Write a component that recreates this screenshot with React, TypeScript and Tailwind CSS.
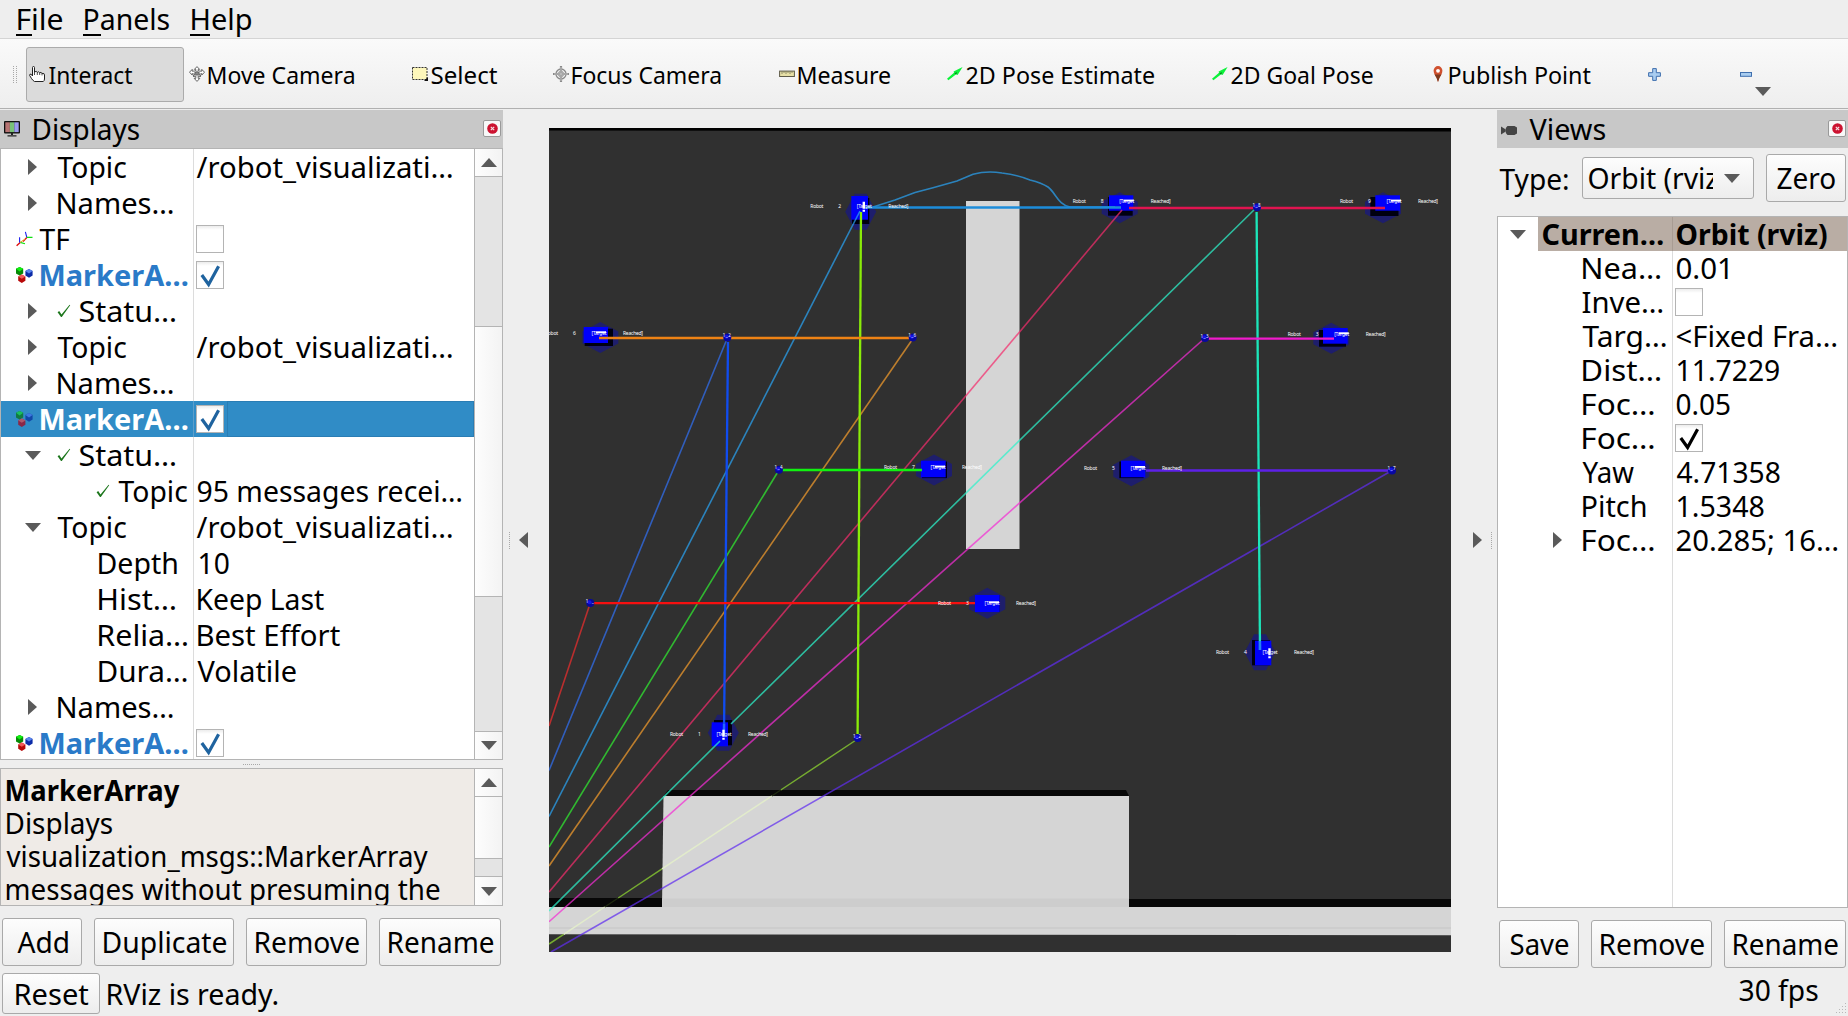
import { useLayoutEffect, useRef, type ReactNode } from "react";

/* ---------- text fitted to a given ink width ---------- */

function T({ w, className = "", children }: { w: number; className?: string; children: string }) {
  const ref = useRef<HTMLSpanElement>(null);
  useLayoutEffect(() => {
    const el = ref.current;
    if (!el) return;
    const ctx = document.createElement("canvas").getContext("2d");
    if (!ctx) return;
    const cs = getComputedStyle(el);
    ctx.font = `${cs.fontWeight} ${cs.fontSize} ${cs.fontFamily}`;
    const m = ctx.measureText(children);
    const k = w / (m.actualBoundingBoxLeft + m.actualBoundingBoxRight);
    el.style.transform = `translateX(${m.actualBoundingBoxLeft * k + 0.5}px) scaleX(${k})`;
  }, [w, children]);
  return (
    <span className={`block shrink-0 ${className}`} style={{ width: w }}>
      <span ref={ref} className="inline-block origin-left whitespace-pre">
        {children}
      </span>
    </span>
  );
}

/* ---------- small icons ---------- */

const Down = ({ className = "" }: { className?: string }) => (
  <svg className={`h-[9px] w-4 shrink-0 ${className}`} viewBox="0 0 16 9">
    <path d="M0 0H16L8 9Z" fill="#5a5a5a" />
  </svg>
);
const Up = () => (
  <svg className="h-[9px] w-4" viewBox="0 0 16 9">
    <path d="M0 9H16L8 0Z" fill="#5a5a5a" />
  </svg>
);
const Right = ({ className = "" }: { className?: string }) => (
  <svg className={`h-4 w-[9px] shrink-0 ${className}`} viewBox="0 0 9 16">
    <path d="M0 0V16L9 8Z" fill="#5a5a5a" />
  </svg>
);

const HandIcon = () => (
  <svg className="h-4 w-4" viewBox="0 0 16 16">
    <path
      d="M3.5 10V1.5Q3.5.5 4.5.5T5.5 1.5V6Q7.5 4.5 8.3 6.4 9.8 5 10.7 6.8 12 5.6 13 7.4 15.5 6.8 15.5 9V13Q15.4 14.8 14.3 15.5H5.5Q3.6 14.4 2.6 12.6L.6 9.4Q.5 7.4 2.4 8.4Z"
      fill="#fff"
      stroke="#222"
    />
    <path d="M5.5 6V9M8.3 6.4V9M10.7 6.8V9M13 7.4V9.4" stroke="#222" strokeWidth=".8" />
  </svg>
);
const MoveIcon = () => (
  <svg className="h-4 w-4" viewBox="0 0 16 16" fill="#fff" stroke="#555" strokeWidth=".9">
    <path d="M8 .6L10.6 3.4H9.2V5L12.8 5.2V3.4L15.5 6.2 12.8 9V7.6L9.6 8.6 12 9.8 11 11 9.2 9.8V12.4H10.8L8 15.4 5.2 12.4H6.8V9.8L5 11 4 9.8 6.4 8.6 3.2 7.6V9L.5 6.2 3.2 3.4V5.2L6.8 5V3.4H5.4Z" />
    <path d="M5.4 7L8 5.6 10.6 7 8 9.4Z" fill="#888" />
  </svg>
);
const SelectIcon = () => (
  <svg className="h-4 w-4" viewBox="0 0 16 16">
    <rect x=".5" y="1.5" width="14.5" height="12" fill="#fdf7bb" stroke="#333" strokeDasharray="2 1" />
    <path d="M16 11V15H12Z" fill="#111" />
  </svg>
);
const FocusIcon = () => (
  <svg className="h-4 w-4" viewBox="0 0 16 16" fill="none" stroke="#8a8a8a">
    <circle cx="8" cy="8" r="5" fill="#eee" strokeWidth="1.3" />
    <circle cx="8" cy="8" r="2.6" />
    <path d="M8 0V16M0 8H16" strokeWidth="2.2" />
    <path d="M8 1V15M1 8H15" stroke="#ddd" strokeWidth=".7" />
  </svg>
);
const MeasureIcon = () => (
  <svg className="h-4 w-4" viewBox="0 0 16 16">
    <rect x=".6" y="5.1" width="14.8" height="5.4" fill="#e6dfa6" stroke="#5d5a48" />
    <path d="M3 5V8M5 5V7M7 5V8M9 5V7M11 5V8M13 5V7" stroke="#777355" strokeWidth=".8" />
  </svg>
);
const ArrowIcon = () => (
  <svg className="h-4 w-4" viewBox="0 0 16 16">
    <path d="M0 12.8L7 6.8 6.6 5.6 15.6 1 10.6 9 9.2 8.2 1.4 14.2Z" fill="#0cf23a" />
    <path d="M7.4 7.6L9.8 6 9.4 8.4Z" fill="#087a1c" />
  </svg>
);
const PinIcon = () => (
  <svg className="h-4 w-4" viewBox="0 0 16 16">
    <path d="M8 16Q7 12 4.6 8.6 3.6 6.4 3.6 4.6A4.4 4.5 0 0 1 12.4 4.6Q12.4 6.4 11.4 8.6 9 12 8 16Z" fill="#d0512f" />
    <path d="M8 16Q7 12 4.6 8.6H11.4Q9 12 8 16Z" fill="#7c3a1e" />
    <circle cx="8" cy="4.8" r="1.9" fill="#fff" />
  </svg>
);
const PlusIcon = () => (
  <svg className="h-[13px] w-[13px]" viewBox="0 0 13 13">
    <path d="M4.7.6H8.3V4.7H12.4V8.3H8.3V12.4H4.7V8.3H.6V4.7H4.7Z" fill="#a9cdf0" stroke="#3f6fae" />
  </svg>
);
const MinusIcon = () => (
  <svg className="h-[5px] w-3" viewBox="0 0 12 5">
    <rect x=".5" y=".5" width="11" height="3.8" fill="#a9cdf0" stroke="#3f6fae" />
  </svg>
);
const MonitorIcon = () => (
  <svg className="h-4 w-4" viewBox="0 0 16 16">
    <rect x="0" y="0" width="16" height="12.5" rx="1" fill="#111" />
    <rect x="1.3" y="1.3" width="4.6" height="9.8" fill="#b87474" />
    <rect x="5.9" y="1.3" width="4.4" height="9.8" fill="#79c279" />
    <rect x="10.3" y="1.3" width="4.4" height="9.8" fill="#9a9af0" />
    <path d="M7 12H9V14H7ZM3.5 14.2H12.5V15.6H3.5Z" fill="#222" />
  </svg>
);
const CameraIcon = () => (
  <svg className="h-[9px] w-4" viewBox="0 0 16 9">
    <path d="M0 .4L4.8 3.4V5.6L0 8.6Z" fill="#444" />
    <path d="M6.5 0H13.5L16 1.5V7.5L13.5 9H6.5L4.8 7V2Z" fill="#444" />
  </svg>
);
const MarkerIcon = ({ dim = false }: { dim?: boolean }) => (
  <svg className="h-4 w-[17px] shrink-0" viewBox="0 0 17 16">
    <path d="M3.6 0L7.2 1.8V6.6L3.6 8.6 0 6.6V1.8Z" fill={dim ? "#117a44" : "#078a07"} />
    <path d="M3.6 0L7.2 1.8 3.6 4.4 0 1.8Z" fill={dim ? "#18c060" : "#12f012"} />
    <path d="M13 2L16.6 4V8.6L13 10.8 9.4 8.6V4Z" fill={dim ? "#1148a8" : "#0c2ca8"} />
    <path d="M13 2L16.6 4 13 6.4 9.4 4Z" fill={dim ? "#3d78e0" : "#5a86ee"} />
    <path d="M5.8 7.4L9.4 9.4V13.8L5.8 16 2.2 13.8V9.4Z" fill={dim ? "#8a2848" : "#b80808"} />
    <path d="M5.8 7.4L9.4 9.4 5.8 11.8 2.2 9.4Z" fill={dim ? "#b0586c" : "#f25c5c"} />
  </svg>
);
const TfIcon = () => (
  <svg className="h-4 w-[17px] shrink-0" viewBox="0 0 17 16" fill="none" strokeWidth="1.1">
    <path d="M4.2 11.4L.6 14.8M10.8 6.4L7 10.4" stroke="#e01010" strokeWidth="1.4" />
    <path d="M3.6 11.5V6.2M10.8 6.4L9.4.8" stroke="#1c1cf0" />
    <path d="M4.2 11.4L9 12.8M10.8 6.4H16.5" stroke="#10e010" />
    <path d="M4 11.4L9.4 8" stroke="#e8a020" strokeWidth="1" />
  </svg>
);
const OkIcon = () => (
  <svg className="h-[14px] w-[14px] shrink-0" viewBox="0 0 14 14">
    <path d="M.6 8.2L2.2 7 4.5 10.4 12.6 .8 13.2 1.2 4.8 13H4Z" fill="#1c761c" />
  </svg>
);
const Close = () => (
  <span className="flex h-[17px] w-[18px] items-center justify-center rounded-[2px] border border-[#999] bg-[#f8f8f8]">
    <svg className="h-[11px] w-[11px]" viewBox="0 0 11 11">
      <circle cx="5.5" cy="5.5" r="5.3" fill="#cc1230" />
      <path d="M3.8 3.8L7.2 7.2M7.2 3.8L3.8 7.2" stroke="#f6dde2" strokeWidth="1.2" />
    </svg>
  </span>
);

function Check({ on = false, color = "#1f639f" }: { on?: boolean; color?: string }) {
  return (
    <span className="block h-7 w-7 shrink-0 border border-[#b4b4b4] bg-linear-to-b from-[#ececec] from-0% to-white to-15%">
      {on && (
        <svg className="h-[26px] w-[26px]" viewBox="0 0 26 26">
          <path d="M4.8 13L11.6 22.4 21.6 4.2" fill="none" stroke={color} strokeWidth="3.2" />
        </svg>
      )}
    </span>
  );
}

/* ---------- chrome ---------- */

function Menu({ first, rest, w, u }: { first: string; rest: string; w: number; u: string }) {
  return (
    <div className="relative">
      <T w={w}>{first + rest}</T>
      <span className={`absolute -left-px top-[34px] h-[2px] bg-black ${u}`} />
    </div>
  );
}

function Tool({ icon, label, w, box }: { icon: ReactNode; label: string; w: number; box: string }) {
  return (
    <div className={`flex h-[55px] items-center gap-[3px] ${box}`}>
      <span className="mb-px">{icon}</span>
      <T w={w} className="pt-px text-[23.3px] leading-[54px]">
        {label}
      </T>
    </div>
  );
}

function Btn({ label, w, box, lh = "leading-[46px]" }: { label: string; w: number; box: string; lh?: string }) {
  return (
    <button
      className={`flex shrink-0 items-center justify-center rounded-[3px] border border-[#a9a9a9] bg-linear-to-b from-[#fdfdfd] to-[#ededed] ${box}`}
    >
      <T w={w} className={`text-left ${lh}`}>
        {label}
      </T>
    </button>
  );
}

const track = "bg-[#e4e4e4]";
const thumb = "bg-linear-to-r from-[#fdfdfd] to-[#f3f3f3]";

function Scroll({ a, b, c }: { a: string; b: string; c: string }) {
  return (
    <div className="flex w-[28px] shrink-0 flex-col border-l border-[#b4b4b4]">
      <div className={`flex h-[27px] shrink-0 items-center justify-center ${thumb}`}>
        <Up />
      </div>
      <div className={`shrink-0 border-t border-[#b4b4b4] ${track} ${a}`} />
      <div className={`shrink-0 ${thumb} ${b}`} />
      <div className={`shrink-0 border-y border-[#b4b4b4] ${track} ${c}`} />
      <div className={`flex min-h-0 flex-1 items-center justify-center ${thumb}`}>
        <Down />
      </div>
    </div>
  );
}

/* ---------- displays tree ---------- */

type Row = {
  pad: string;
  kind?: "right" | "down";
  icon?: "tf" | "marker" | "ok";
  label: string;
  w: number;
  blue?: boolean;
  sel?: boolean;
  val?: string;
  vw?: number;
  check?: boolean;
};

const topic: Row = { pad: "pl-[27px]", kind: "right", label: "Topic", w: 68.6, val: "/robot_visualizati…", vw: 255.6 };
const names: Row = { pad: "pl-[27px]", kind: "right", label: "Names…", w: 115.5 };
const marker: Row = { pad: "pl-[15px]", icon: "marker", label: "MarkerA…", w: 147, blue: true, check: true };

const rows: Row[] = [
  topic,
  names,
  { pad: "pl-[15px]", icon: "tf", label: "TF", w: 30.5, check: false },
  marker,
  { pad: "pl-[27px]", kind: "right", icon: "ok", label: "Statu…", w: 96 },
  topic,
  names,
  { ...marker, sel: true },
  { pad: "pl-[24px]", kind: "down", icon: "ok", label: "Statu…", w: 96 },
  { pad: "pl-[95px]", icon: "ok", label: "Topic", w: 68.6, val: "95 messages recei…", vw: 264 },
  { ...topic, pad: "pl-[24px]", kind: "down" },
  { pad: "pl-[97px]", label: "Depth", w: 78.8, val: "10", vw: 29 },
  { pad: "pl-[97px]", label: "Hist…", w: 77, val: "Keep Last", vw: 126.5 },
  { pad: "pl-[97px]", label: "Relia…", w: 89, val: "Best Effort", vw: 142.5 },
  { pad: "pl-[97px]", label: "Dura…", w: 88.3, val: "Volatile", vw: 98.5 },
  names,
  marker,
];

function DisplayRow({ r }: { r: Row }) {
  const tone = r.sel ? "bg-[#308cc6] text-white font-bold" : r.blue ? "text-[#2a7ac8] font-bold" : "";
  return (
    <div className={`flex h-9 shrink-0 leading-9 ${tone}`}>
      <div className={`flex w-[193px] shrink-0 items-center border-r ${r.sel ? "border-[#5d9fcb]" : "border-[#dcdcdc]"} ${r.pad}`}>
        {r.kind === "right" && <Right className="mr-[20px]" />}
        {r.kind === "down" && <Down className="mr-[16px]" />}
        {r.icon === "ok" && (
          <span className="mr-[8px]">
            <OkIcon />
          </span>
        )}
        {r.icon === "marker" && (
          <span className="mr-[7px]">
            <MarkerIcon dim={r.sel} />
          </span>
        )}
        {r.icon === "tf" && (
          <span className="mr-[6px]">
            <TfIcon />
          </span>
        )}
        <T w={r.w}>{r.label}</T>
      </div>
      <div className="flex min-w-0 flex-1 items-center pl-[2px]">
        {r.check !== undefined && <Check on={r.check} />}
        {r.sel && <span className="ml-[3px] h-9 flex-1 border border-[#2a7db4]" />}
        {r.val && (
          <T w={r.vw ?? 0} className={r.val === "10" ? "ml-[3px]" : r.val[0] === "/" ? "" : "ml-px"}>
            {r.val}
          </T>
        )}
      </div>
    </div>
  );
}

/* ---------- views tree ---------- */

type VRow = { label: string; w: number; val?: string; vw?: number; check?: boolean; arrow?: boolean };
const viewRows: VRow[] = [
  { label: "Nea…", w: 78, val: "0.01", vw: 52 },
  { label: "Inve…", w: 80, check: false },
  { label: "Targ…", w: 83.5, val: "<Fixed Fra…", vw: 160 },
  { label: "Dist…", w: 78, val: "11.7229", vw: 101.5 },
  { label: "Foc…", w: 71.5, val: "0.05", vw: 53.3 },
  { label: "Foc…", w: 71.5, check: true },
  { label: "Yaw", w: 52, val: "4.71358", vw: 103 },
  { label: "Pitch", w: 63.4, val: "1.5348", vw: 86 },
  { label: "Foc…", w: 71.5, val: "20.285; 16…", vw: 161, arrow: true },
];

/* ---------- 3D scene ---------- */

type Robot = {
  c: [number, number];
  v?: boolean;
  b: [number, number, number, number];
  k: [number, number, number, number];
  t: [number, number];
  n: string;
};
const robots: Robot[] = [
  { c: [860.7, 211.7], v: true, b: [851.3, 196, 16.7, 23.7], k: [852, 198, 17.3, 26], t: [810.3, 207.7], n: "2" },
  { c: [600.3, 337.5], b: [583.7, 327, 24.3, 16], k: [584.7, 328.7, 28.3, 17.3], t: [545, 335], n: "6" },
  { c: [934, 470], b: [921, 460.7, 24.7, 16.6], k: [922, 461.5, 25, 16.6], t: [884, 469.3], n: "7" },
  { c: [1119.7, 207.7], b: [1109, 195.3, 24.3, 15.4], k: [1108, 197, 24.7, 18.7], t: [1072.7, 203.3], n: "8" },
  { c: [1383, 207.7], b: [1375.3, 195.3, 24.7, 15.4], k: [1370.3, 197, 28.2, 19], t: [1340, 203.3], n: "9" },
  { c: [1331.3, 338.3], b: [1323, 328, 24.7, 15.7], k: [1319, 330, 27, 16.7], t: [1287.7, 336], n: "3" },
  { c: [1131.3, 470.7], b: [1121, 460.7, 24.3, 16.6], k: [1119.3, 461.5, 24.3, 16.6], t: [1084, 469.7], n: "5" },
  { c: [987.3, 603.3], b: [975, 595, 24.7, 17], k: [975, 595, 24.7, 17], t: [938, 605], n: "3" },
  { c: [723.3, 732.7], v: true, b: [711.7, 722.3, 16.3, 24], k: [714, 720, 18, 25.3], t: [670, 735.7], n: "1" },
  { c: [1260, 652.3], v: true, b: [1255, 640.7, 16.3, 24.6], k: [1252, 640, 18, 25.3], t: [1216, 654.3], n: "4" },
];
const hexH = "-18,-6 0,-15.5 18,-6 18,6 0,15.5 -18,6";
const hexV = "-15.5,0 -8,-14 -6,-18 6,-18 8,-14 15.5,0 8,14 6,18 -6,18 -8,14";

const thin: [string, string][] = [
  ["M590.3 603L549 726", "#f02e2e"],
  ["M727 339L549 770.5", "#3070f4"],
  ["M860 211L549 816.5", "#2aa4f4"],
  ["M779 470L549 847", "#30ee30"],
  ["M912.7 339L549 866", "#f49c2c"],
  ["M1122 210L549 892", "#f42c6c"],
  ["M1257 207L731 724M720 741L549 911", "#2cf2ca"],
  ["M1205 338L549 921.7", "#f42cd4"],
  ["M1392 470.5L551 952", "#602cf0"],
  ["M873 207L895 200 915 192.5 933 187.8 957 181 973 174.2Q987 170.5 1002 173 1018 175 1030 180 1042 183 1048 187C1056 193 1058 205 1070 207H1115", "#2aa4f4"],
];
const thick: [string, string][] = [
  ["M866 207.5H1121", "#1c8cda"],
  ["M1129 208H1385", "#e01450"],
  ["M861 212L857.6 734", "#8aec08"],
  ["M599 338H912", "#ee8214"],
  ["M728 342L724 733", "#104cf0"],
  ["M781 470H922", "#10f210"],
  ["M593 603.2H975", "#f61010"],
  ["M1256.6 212L1260 650", "#1ce6ba"],
  ["M1207 338.6H1334", "#f01acc"],
  ["M1146 470.5H1390", "#5e20e8"],
];
const nodes: [number, number, string][] = [
  [727.3, 337.5, "1_2"],
  [912.7, 337.5, "1_6"],
  [779, 469.8, "1_4"],
  [590.3, 603, "1_"],
  [857.6, 738, "1_2"],
  [1257, 207.3, "1_8"],
  [1205, 338, "1_3"],
  [1392, 470.5, "1_7"],
];

function Scene() {
  return (
    <svg className="h-[824px] w-[902px]" viewBox="549 128 902 824">
      <rect x="549" y="128" width="902" height="824" fill="#303030" />
      <path d="M549 128H1451V131.5L549 130.5Z" fill="#000" />
      <rect x="966" y="201" width="53.5" height="348" fill="#d5d5d5" />
      <path d="M668 790H1126L1129 796H663.5Z" fill="#080808" />
      <path d="M549 898H662V907H549ZM1129 899H1451V907.5H1129Z" fill="#080808" />
      <path d="M663.5 796H1129V907H662Z" fill="#d5d5d5" />
      <path d="M662 898.5H1129V907H662ZM549 927H1451V929H549Z" fill="#cdcdcd" />
      <path d="M549 907H1451V927H549ZM549 929H1451V935.3L549 934.3Z" fill="#d5d5d5" />
      {robots.map((r) => (
        <g key={r.t[0]}>
          <polygon points={r.v ? hexV : hexH} transform={`translate(${r.c[0]} ${r.c[1]})`} fill="#1e1e6c" />
          <rect x={r.k[0]} y={r.k[1]} width={r.k[2]} height={r.k[3]} fill="#000010" />
          <rect x={r.b[0]} y={r.b[1]} width={r.b[2]} height={r.b[3]} fill="#0000fa" />
        </g>
      ))}
      {thin.map(([d, c]) => (
        <path key={d} d={d} fill="none" stroke={c} strokeWidth="1.6" opacity=".72" />
      ))}
      {/* lime path: its tone follows the surface below it */}
      <g strokeWidth="1.5">
        <path d="M857.6 739L780.8 790M662 868.9L618.2 898M563.7 934.3L549 944" stroke="#76ac30" />
        <path d="M780.8 790L771.8 796M618.2 898L604.7 907" stroke="#1f2a10" />
        <path d="M771.8 796L662 868.9M604.7 907L563.7 934.3" stroke="#e2eccb" />
      </g>
      {thick.map(([d, c]) => (
        <path key={d} d={d} fill="none" stroke={c} strokeWidth="2.3" />
      ))}
      <path d="M724 724V736M1260 641V650" stroke="#2c6cff" strokeWidth="2.4" opacity=".8" />
      {nodes.map(([x, y, s]) => (
        <g key={`${x}`}>
          <circle cx={x} cy={y} r="4" fill="#0808a0" />
          <circle cx={x - 0.8} cy={y - 0.8} r="2" fill="#1414e8" />
          <text x={x - 4.5} y={y - 0.5} fontSize="4.5" fill="#fff" textLength="8">
            {s}
          </text>
        </g>
      ))}
      {robots.map((r) => (
        <g key={r.t[0]} fontSize="5" fill="#fff">
          <text x={r.t[0]} y={r.t[1]} textLength="13">Robot</text>
          <text x={r.t[0] + 28} y={r.t[1]}>{r.n}</text>
          <text x={r.t[0] + 46.5} y={r.t[1]} textLength="15">[Target</text>
          <text x={r.t[0] + 78} y={r.t[1]} textLength="20">Reached]</text>
          {r.v ? (
            <path d={`M${r.t[0] + 53.5} ${r.t[1] - 6}V${r.t[1] + 5}`} stroke="#fff" strokeWidth="2.4" strokeDasharray="7 1 2 1" />
          ) : (
            <path d={`M${r.t[0] + 51} ${r.t[1] - 2.8}H${r.t[0] + 61}`} stroke="#fff" strokeWidth="1.8" />
          )}
        </g>
      ))}
    </svg>
  );
}

/* ---------- splitters ---------- */

const DotsV = () => <span className="h-[17px] w-0 border-l border-dotted border-[#a8a8a8]" />;

export default function App() {
  return (
    <div className="flex h-[1016px] w-[1848px] flex-col overflow-hidden bg-[#eeeeee] font-['Noto_Sans',sans-serif] text-[28.5px] leading-9 text-black">
      <div className="flex h-[39px] shrink-0 gap-[22px] border-b border-[#d4d4d4] pl-[17px] leading-[38px]">
        <Menu first="F" rest="ile" w={45} u="w-[16px]" />
        <Menu first="P" rest="anels" w={85} u="w-[18px]" />
        <Menu first="H" rest="elp" w={59.5} u="w-[20px]" />
      </div>

      <div className="flex h-[70px] shrink-0 items-center border-b border-[#b0b0b0] bg-linear-to-b from-[#fafafa] to-[#eeeeee] pt-[2px]">
        <span className="ml-[13px] flex w-[13px] gap-[2px]">
          <DotsV />
          <DotsV />
        </span>
        <Tool icon={<HandIcon />} label="Interact" w={83.5} box="w-[158px] rounded-[3px] border border-[#ababab] bg-[#dbdbdb] pl-[2px]" />
        <Tool icon={<MoveIcon />} label="Move Camera" w={146} box="ml-[5px] w-[223px]" />
        <Tool icon={<SelectIcon />} label="Select" w={65.5} box="w-[141px]" />
        <Tool icon={<FocusIcon />} label="Focus Camera" w={148.6} box="w-[226px]" />
        <Tool icon={<MeasureIcon />} label="Measure" w={91.5} box="w-[168px]" />
        <Tool icon={<ArrowIcon />} label="2D Pose Estimate" w={187.5} box="w-[265px]" />
        <Tool icon={<ArrowIcon />} label="2D Goal Pose" w={141} box="w-[218px]" />
        <Tool icon={<PinIcon />} label="Publish Point" w={141} box="w-[218px]" />
        <PlusIcon />
        <span className="ml-[79px] flex">
          <MinusIcon />
        </span>
        <Down className="mt-[33px] ml-[3px]" />
      </div>

      <div className="flex min-h-0 flex-1">
        {/* left dock */}
        <div className="flex w-[503px] shrink-0 flex-col">
          <div className="mt-px flex h-[38px] shrink-0 items-center bg-[#c8c8c8] pl-[4px] pr-[2px] leading-[38px]">
            <MonitorIcon />
            <T w={106} className="ml-[13px]">
              Displays
            </T>
            <span className="mb-px ml-auto">
              <Close />
            </span>
          </div>
          <div className="flex h-[612px] shrink-0 overflow-hidden border border-[#b4b4b4] bg-white">
            <div className="flex min-w-0 flex-1 flex-col overflow-hidden">
              {rows.map((r, i) => (
                <DisplayRow key={i} r={r} />
              ))}
            </div>
            <Scroll a="h-[151px] border-b" b="h-[269px]" c="h-[136px]" />
          </div>
          <div className="flex h-[8px] shrink-0 items-center justify-center">
            <span className="w-[17px] border-t border-dotted border-[#a8a8a8]" />
          </div>
          <div className="flex h-[138px] shrink-0 overflow-hidden border border-[#b4b4b4] bg-[#efebe7]">
            <div className="min-w-0 flex-1 overflow-hidden pl-[5px] pt-[5px] leading-[33px]">
              <T w={173.5} className="font-bold">
                MarkerArray
              </T>
              <T w={106}>Displays</T>
              <T w={421.5}>visualization_msgs::MarkerArray</T>
              <T w={433}>messages without presuming the</T>
            </div>
            <Scroll a="h-px" b="h-[61px]" c="h-[19px]" />
          </div>
          <div className="mt-[12px] flex shrink-0 justify-between pl-[2px] pr-[2px]">
            <Btn label="Add" w={51} box="h-[48px] w-[80px]" />
            <Btn label="Duplicate" w={123} box="h-[48px] w-[140px]" />
            <Btn label="Remove" w={103.5} box="h-[48px] w-[121px]" />
            <Btn label="Rename" w={105} box="h-[48px] w-[122px]" />
          </div>
          <div className="mt-[7px] flex shrink-0 pl-[2px]">
            <Btn label="Reset" w={73} box="h-[41px] w-[98px]" lh="leading-[40px]" />
            <T w={170} className="ml-[7px] leading-[42px]">
              RViz is ready.
            </T>
          </div>
        </div>

        {/* centre */}
        <div className="flex w-[994px] shrink-0">
          <div className="flex w-[46px] shrink-0 items-start gap-[9px] pl-[6px] pt-[423px]">
            <DotsV />
            <Right className="rotate-180" />
          </div>
          <div className="mt-[19px]">
            <Scene />
          </div>
          <div className="flex w-[46px] shrink-0 items-start gap-[9px] pl-[22px] pt-[423px]">
            <Right />
            <DotsV />
          </div>
        </div>

        {/* right dock */}
        <div className="flex w-[351px] shrink-0 flex-col">
          <div className="mt-px flex h-[38px] shrink-0 items-center bg-[#c8c8c8] pl-[4px] pr-[2px] leading-[38px]">
            <span className="mt-[2px]">
              <CameraIcon />
            </span>
            <T w={76} className="ml-[12px]">
              Views
            </T>
            <span className="mb-px ml-auto">
              <Close />
            </span>
          </div>
          <div className="flex h-[68px] shrink-0 items-center pl-[2px]">
            <T w={68.5} className="pb-[7px]">
              Type:
            </T>
            <div className="mb-[8px] ml-[14.5px] flex h-[42px] w-[172px] shrink-0 items-center rounded-[3px] border border-[#a9a9a9] bg-linear-to-b from-[#fdfdfd] to-[#ededed] pl-[5px] leading-[40px]">
              <span className="w-[125px] overflow-hidden">
                <T w={138}>Orbit (rviz)</T>
              </span>
              <Down className="ml-[11px]" />
            </div>
            <span className="mb-[8px] ml-[12px]">
              <Btn label="Zero" w={57.5} box="h-[48px] w-[80px]" />
            </span>
          </div>
          <div className="flex h-[692px] shrink-0 flex-col border border-[#b4b4b4] bg-white">
            <div className="flex h-[34px] shrink-0 font-bold leading-[34px]">
              <div className="flex w-[40px] shrink-0 items-center pl-[12px]">
                <Down />
              </div>
              <div className="w-[135px] shrink-0 border-r border-[#a89c93] bg-[#b9ada4] pl-[4px]">
                <T w={120.5}>Curren…</T>
              </div>
              <div className="flex-1 bg-[#b9ada4] pl-[3px]">
                <T w={150.5}>Orbit (rviz)</T>
              </div>
            </div>
            {viewRows.map((r, i) => (
              <div key={i} className="flex h-[34px] shrink-0 leading-[33px]">
                <div className="flex w-[175px] shrink-0 items-center border-r border-[#dcdcdc] pl-[55px]">
                  <span className="w-[29px]">{r.arrow && <Right />}</span>
                  <T w={r.w}>{r.label}</T>
                </div>
                <div className="flex flex-1 items-center pl-[2px]">
                  {r.check !== undefined ? (
                    <Check on={r.check} color="#000" />
                  ) : (
                    <T w={r.vw ?? 0} className={r.val?.[0] === "1" ? "ml-[2px]" : "ml-px"}>
                      {r.val ?? ""}
                    </T>
                  )}
                </div>
              </div>
            ))}
            <div className="w-[175px] flex-1 border-r border-[#dcdcdc]" />
          </div>
          <div className="mt-[12px] flex shrink-0 justify-between pl-[2px] pr-[2px]">
            <Btn label="Save" w={58} box="h-[48px] w-[80px]" />
            <Btn label="Remove" w={103.5} box="h-[48px] w-[121px]" />
            <Btn label="Rename" w={104.5} box="h-[48px] w-[122px]" />
          </div>
          <div className="flex flex-1 justify-end">
            <T w={78.5} className="mt-[4px]">
              30 fps
            </T>
            <svg className="ml-[18px] mt-auto h-[13px] w-[13px]" viewBox="0 0 13 13" fill="#b8b8b8">
              <path d="M10 0h1v1h-1zM7 3h1v1h-1zM10 3h1v1h-1zM4 6h1v1h-1zM7 6h1v1h-1zM10 6h1v1h-1zM1 9h1v1h-1zM4 9h1v1h-1zM7 9h1v1h-1zM10 9h1v1h-1z" />
            </svg>
          </div>
        </div>
      </div>
    </div>
  );
}
